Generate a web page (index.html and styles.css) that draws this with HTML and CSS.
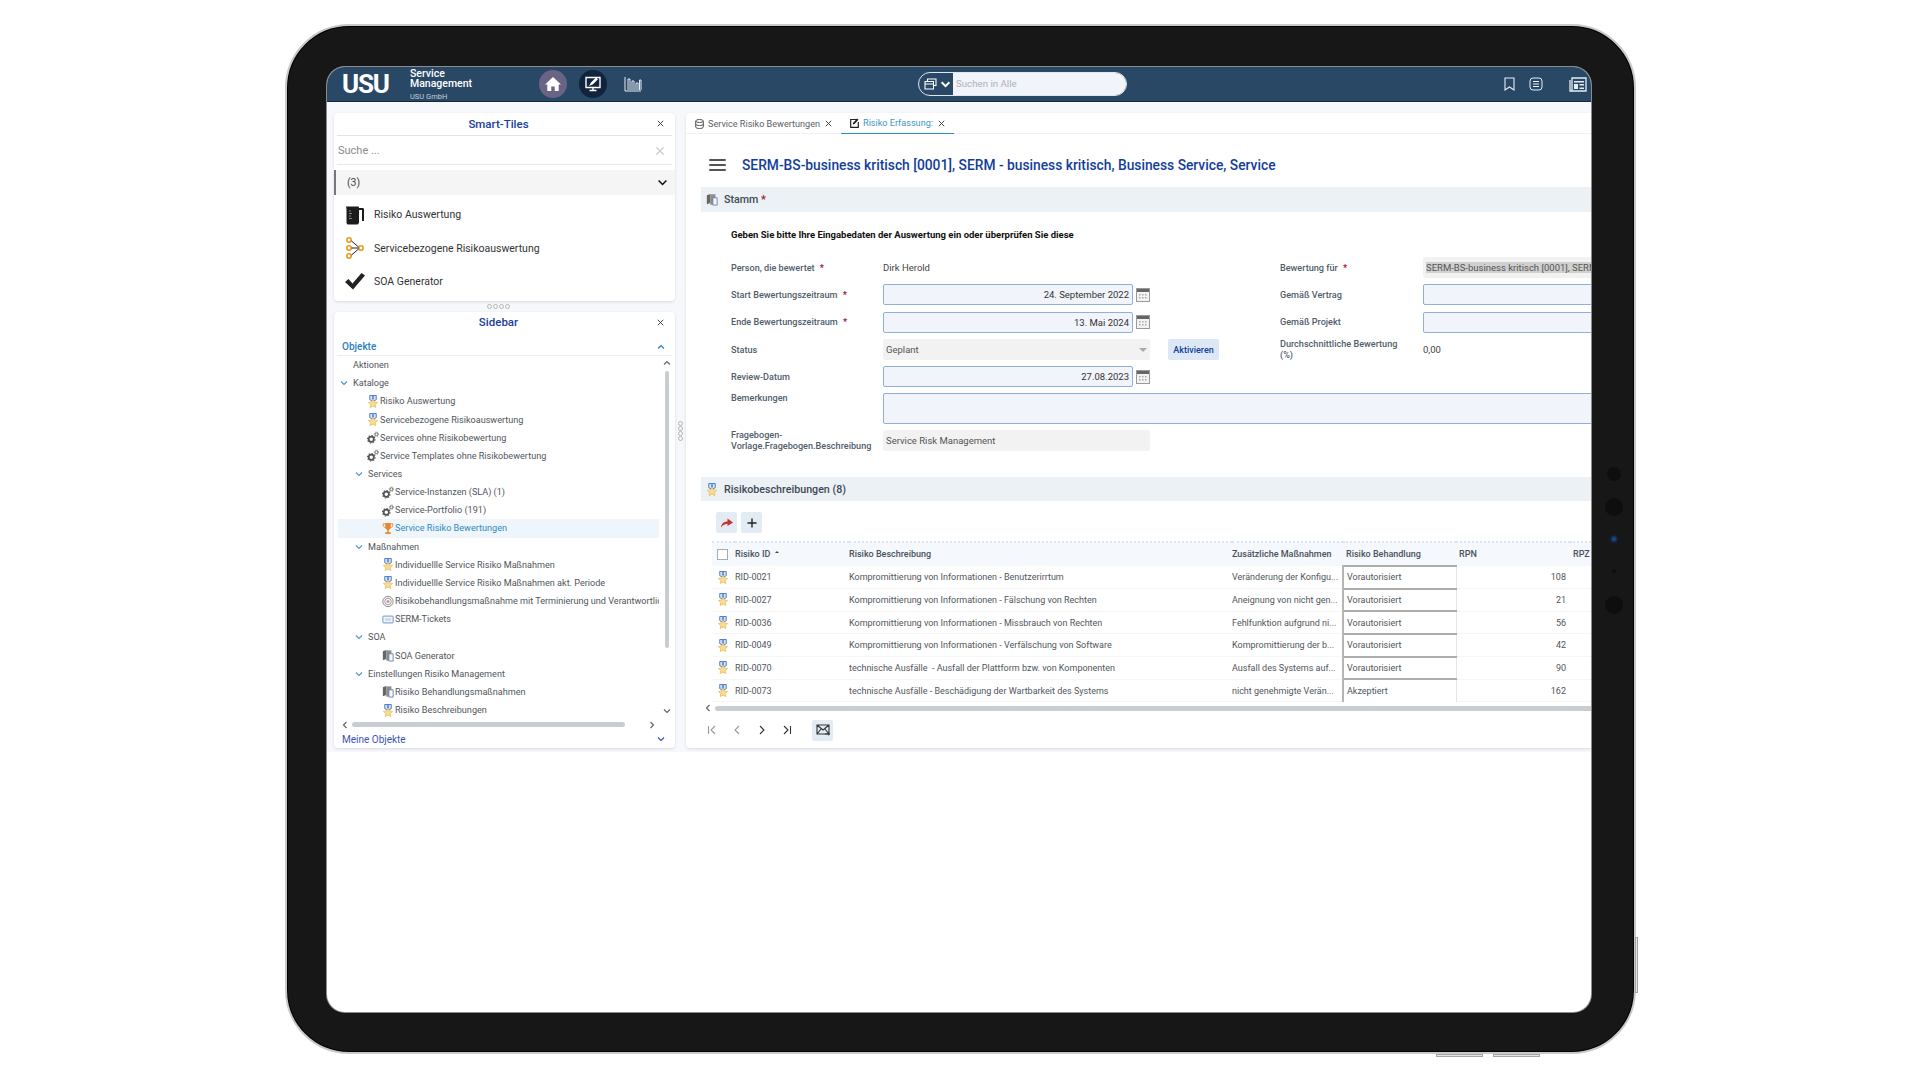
FILE: index.html
```html
<!DOCTYPE html>
<html lang="de">
<head>
    <meta charset="UTF-8">
    <title>USU Service Management</title>
    <link rel="stylesheet" href="styles.css">
</head>
<body>

<svg class="sprite" width="0" height="0">
    <symbol id="medal" viewBox="0 0 12 14">
        <path d="M2.500 .5h7v4.500L6 7 2.500 5z" fill="#dfe9f7" stroke="#3f74c6"/>
        <path d="M4.800 1h2.400v4H4.800z" fill="#6f97d6"/>
        <path d="M6 4.500l1.600 3 3.400.5-2.500 2.300.6 3.200L6 12l-3.100 1.500.6-3.200L1 8l3.400-.5z" fill="#f6dc94" stroke="#e9b548" stroke-width=".7"/>
    </symbol>
    <symbol id="gears" viewBox="0 0 14 14">
        <circle cx="5" cy="9" r="3" fill="none" stroke="#555" stroke-width="2"/>
        <circle cx="5" cy="9" r="4.400" fill="none" stroke="#555" stroke-width="1.300" stroke-dasharray="1.700 1.700"/>
        <circle cx="11" cy="3.200" r="1.700" fill="none" stroke="#666" stroke-width="1.100"/>
        <circle cx="11" cy="3.200" r="2.600" fill="none" stroke="#666" stroke-width=".8" stroke-dasharray="1 1"/>
    </symbol>
    <symbol id="trophy" viewBox="0 0 12 14">
        <path d="M3 1h6v4.500C9 7.500 7.500 8.500 6.800 8.500V11H9v2H3v-2h2.200V8.500C4.500 8.500 3 7.500 3 5.500z" fill="#e58a2c"/>
        <path d="M3 2H.7c0 2.500 1 4 2.800 4.400M9 2h2.300c0 2.500-1 4-2.800 4.400" fill="none" stroke="#e58a2c"/>
    </symbol>
    <symbol id="target" viewBox="0 0 14 14">
        <circle cx="7" cy="7" r="6" fill="none" stroke="#777"/>
        <circle cx="7" cy="7" r="3.800" fill="none" stroke="#888"/>
        <circle cx="7" cy="7" r="1.800" fill="#d98aa0"/>
    </symbol>
    <symbol id="ticket" viewBox="0 0 14 14">
        <rect x="1" y="3" width="12" height="8" rx="1" fill="#eef4fb" stroke="#5f86bd"/>
        <path d="M3.500 5.500h7v3h-7z" fill="#c9d9ee"/>
    </symbol>
    <symbol id="book" viewBox="0 0 14 14">
        <path d="M1 2l4-1.500V11l-4 1.500z" fill="#666"/>
        <path d="M5 1h6v12H5z" fill="#8c8c8c"/>
        <path d="M8 5h5v8.500H8z" fill="#f4f6fa" stroke="#5f7ea8"/>
    </symbol>
    <symbol id="chev" viewBox="0 0 10 10">
        <path d="M2 3.500L5 6.500 8 3.500" fill="none" stroke="currentColor" stroke-width="1.200"/>
    </symbol>
    <symbol id="cross" viewBox="0 0 10 10">
        <path d="M2 2l6 6M8 2L2 8" fill="none" stroke="currentColor" stroke-width="1.100"/>
    </symbol>
    <symbol id="calendar" viewBox="0 0 14 14">
        <rect x=".5" y=".5" width="13" height="13" fill="#f3f3f3" stroke="#999"/>
        <rect x="1" y="1" width="12" height="3" fill="#666"/>
        <path d="M3 6h1.500v1.500H3zM6 6h1.500v1.500H6zM9 6h1.500v1.500H9zM3 9h1.500v1.500H3zM6 9h1.500v1.500H6zM9 9h1.500v1.500H9z" fill="#aaa"/>
    </symbol>
</svg>

<div class="device">
    <div class="screen">

        <header class="topbar">
            <div class="logo">USU</div>
            <div class="brand">
                <div>Service</div>
                <div>Management</div>
                <div class="brand-sub">USU GmbH</div>
            </div>
            <div class="nav">
                <div class="nav-btn home">
                    <svg width="18" height="18" viewBox="0 0 18 18"><path d="M9 2L1 9.500h2.300V16h4v-4.500h3.400V16h4V9.500H17z" fill="#fff"/></svg>
                </div>
                <div class="nav-btn monitor">
                    <svg width="18" height="18" viewBox="0 0 18 18"><path d="M2 2.500h14v10H2zM9 12.500v2.500M5.500 15.500h7" fill="none" stroke="#fff" stroke-width="1.400"/><path d="M5 11l2-3.500 5-5 2 1.800-5 5z" fill="#fff"/></svg>
                </div>
                <div class="nav-btn chart">
                    <svg width="18" height="18" viewBox="0 0 18 18"><path d="M1 2v14h16M4 15V4M4 4h2v11M8 15V6h2v9M12 15V8h2v7M15.500 15V5h1.500v10" fill="none" stroke="#e6edf4" stroke-width="1"/></svg>
                </div>
            </div>
            <div class="search">
                <div class="search-type">
                    <svg width="13" height="12" viewBox="0 0 13 12"><path d="M3.500 3V1H12v6.500h-2M1 3.500h8.500V11H1zM1 6h8.500" fill="none" stroke="#fff" stroke-width="1.100"/></svg>
                    <svg width="11" height="11" viewBox="0 0 10 10"><path d="M1.500 3L5 6.500 8.500 3" fill="none" stroke="#fff" stroke-width="1.800"/></svg>
                </div>
                <div class="search-input">Suchen in Alle</div>
            </div>
            <div class="top-icons">
                <svg class="bookmark" width="11" height="14" viewBox="0 0 11 14"><path d="M1 1h9v12L5.500 10 1 13z" fill="none" stroke="#e6edf4" stroke-width="1.100"/></svg>
                <svg class="listing" width="14" height="14" viewBox="0 0 14 14"><rect x="1" y="1" width="12" height="12" rx="3" fill="none" stroke="#e6edf4"/><path d="M4 4.500h6M4 7h6M4 9.500h6" stroke="#e6edf4"/></svg>
                <svg class="paper" width="18" height="15" viewBox="0 0 18 15"><path d="M3 1h14v13H3zM1 3v11h2" fill="none" stroke="#e6edf4" stroke-width="1.300"/><path d="M5 4h10v1.500H5zM5 7h4v5H5zM10.500 7H15v1.500h-4.500zM10.500 10.500H15V12h-4.500z" fill="#e6edf4"/></svg>
            </div>
        </header>

        <div class="workspace">
            <div class="leftcol">

                <section class="panel tiles">
                    <div class="panel-head tiles-head">
                        <span class="panel-title">Smart-Tiles</span>
                        <svg class="panel-close"><use href="#cross"/></svg>
                    </div>
                    <div class="tile-search">
                        <span>Suche ...</span>
                        <svg class="tile-clear"><use href="#cross"/></svg>
                    </div>
                    <div class="tile-group">
                        <span>(3)</span>
                        <svg class="tile-group-chev"><use href="#chev"/></svg>
                    </div>
                    <div class="tile">
                        <svg width="20" height="20" viewBox="0 0 20 20"><path d="M1 1.500h12.500l.5 1V18l-1.500 1.500h-10L1.500 18V4z" fill="#1c1c1c"/><path d="M14 3h3.500c1 0 1.500.6 1.500 1.500V16h-2V5h-3z" fill="#1c1c1c"/><path d="M4 6h2M4 8.500h3M4 11h2M4 13.500h3" stroke="#888"/></svg>
                        <span>Risiko Auswertung</span>
                    </div>
                    <div class="tile">
                        <svg width="20" height="22" viewBox="0 0 20 22"><g fill="none" stroke="#e39a1c" stroke-width="1.500"><circle cx="4" cy="3" r="2.200"/><circle cx="4" cy="11" r="2.200"/><circle cx="4" cy="19" r="2.200"/><circle cx="16" cy="11" r="2.200"/></g><path d="M6.500 4l7 6M6.500 11h7M6.500 18l7-6" stroke="#222" stroke-width="1"/></svg>
                        <span>Servicebezogene Risikoauswertung</span>
                    </div>
                    <div class="tile">
                        <svg width="20" height="17" viewBox="0 0 20 17"><path d="M0 9l3.500-3 4 4.500L16.500 0 20 2.500 8 16.500z" fill="#222"/></svg>
                        <span>SOA Generator</span>
                    </div>
                </section>

                <div class="split-h"><i></i><i></i><i></i><i></i></div>

                <section class="panel sidebar">
                    <div class="panel-head">
                        <span class="panel-title">Sidebar</span>
                        <svg class="panel-close"><use href="#cross"/></svg>
                    </div>
                    <div class="acc-head open">
                        <span>Objekte</span>
                        <svg class="acc-chev up"><use href="#chev"/></svg>
                    </div>
                    <div class="tree-wrap">
                        <div class="tree">
                            <div class="row l0"><i class="twist"></i><span>Aktionen</span></div>
                            <div class="row l0"><svg class="twist"><use href="#chev"/></svg><span>Kataloge</span></div>
                            <div class="row i1"><svg class="ico"><use href="#medal"/></svg><span>Risiko Auswertung</span></div>
                            <div class="row i1"><svg class="ico"><use href="#medal"/></svg><span>Servicebezogene Risikoauswertung</span></div>
                            <div class="row i1"><svg class="ico"><use href="#gears"/></svg><span>Services ohne Risikobewertung</span></div>
                            <div class="row i1"><svg class="ico"><use href="#gears"/></svg><span>Service Templates ohne Risikobewertung</span></div>
                            <div class="row l1"><svg class="twist"><use href="#chev"/></svg><span>Services</span></div>
                            <div class="row i2"><svg class="ico"><use href="#gears"/></svg><span>Service-Instanzen (SLA) (1)</span></div>
                            <div class="row i2"><svg class="ico"><use href="#gears"/></svg><span>Service-Portfolio (191)</span></div>
                            <div class="row i2 selected"><svg class="ico"><use href="#trophy"/></svg><span>Service Risiko Bewertungen</span></div>
                            <div class="row l1"><svg class="twist"><use href="#chev"/></svg><span>Maßnahmen</span></div>
                            <div class="row i2"><svg class="ico"><use href="#medal"/></svg><span>Individuellle Service Risiko Maßnahmen</span></div>
                            <div class="row i2"><svg class="ico"><use href="#medal"/></svg><span>Individuellle Service Risiko Maßnahmen akt. Periode</span></div>
                            <div class="row i2"><svg class="ico"><use href="#target"/></svg><span>Risikobehandlungsmaßnahme mit Terminierung und Verantwortlichkeit</span></div>
                            <div class="row i2"><svg class="ico"><use href="#ticket"/></svg><span>SERM-Tickets</span></div>
                            <div class="row l1"><svg class="twist"><use href="#chev"/></svg><span>SOA</span></div>
                            <div class="row i2"><svg class="ico"><use href="#book"/></svg><span>SOA Generator</span></div>
                            <div class="row l1"><svg class="twist"><use href="#chev"/></svg><span>Einstellungen Risiko Management</span></div>
                            <div class="row i2"><svg class="ico"><use href="#book"/></svg><span>Risiko Behandlungsmaßnahmen</span></div>
                            <div class="row i2"><svg class="ico"><use href="#medal"/></svg><span>Risiko Beschreibungen</span></div>
                        </div>
                        <div class="vscroll">
                            <svg class="arrow up"><use href="#chev"/></svg>
                            <div class="vthumb"></div>
                            <svg class="arrow"><use href="#chev"/></svg>
                        </div>
                    </div>
                    <div class="hscroll">
                        <svg class="arrow left"><use href="#chev"/></svg>
                        <div class="hthumb"></div>
                        <svg class="arrow right"><use href="#chev"/></svg>
                    </div>
                    <div class="acc-head closed">
                        <span>Meine Objekte</span>
                        <svg class="acc-chev"><use href="#chev"/></svg>
                    </div>
                </section>
            </div>

            <div class="split-v"><i></i><i></i><i></i><i></i></div>

            <main class="panel content">
                <div class="tabs">
                    <div class="tab">
                        <svg width="9" height="10" viewBox="0 0 9 10"><ellipse cx="4.500" cy="2" rx="3.800" ry="1.500" fill="none" stroke="#555"/><path d="M.7 2v6c0 2 7.600 2 7.600 0V2M.7 5c0 2 7.600 2 7.600 0" fill="none" stroke="#555"/></svg>
                        <span>Service Risiko Bewertungen</span>
                        <svg class="tab-close"><use href="#cross"/></svg>
                    </div>
                    <div class="tab active">
                        <svg width="9" height="10" viewBox="0 0 9 10"><path d="M7 1.500H.7v7.800h7.600V4" fill="none" stroke="#222" stroke-width="1.200"/><path d="M3 5l4-4.500 1.500 1.300-4 4.200-1.800.4z" fill="#222"/></svg>
                        <span>Risiko Erfassung:</span>
                        <svg class="tab-close"><use href="#cross"/></svg>
                    </div>
                </div>

                <div class="title-row">
                    <div class="burger"><i></i><i></i><i></i></div>
                    <h1>SERM-BS-business kritisch [0001], SERM - business kritisch, Business Service, Service</h1>
                </div>

                <div class="band"><svg class="band-ico"><use href="#book"/></svg><span>Stamm <b class="req">*</b></span></div>
                <p class="note">Geben Sie bitte Ihre Eingabedaten der Auswertung ein oder überprüfen Sie diese</p>

                <div class="form">
                    <label class="f-label">Person, die bewertet <b class="req">*</b></label>
                    <div class="f-text f-wide">Dirk Herold</div>
                    <label class="f-label c6">Bewertung für <b class="req">*</b></label>
                    <div class="f-ro c7"><span class="marked">SERM-BS-business kritisch [0001], SERM - business kritisch, Business Service</span></div>

                    <label class="f-label">Start Bewertungszeitraum <b class="req">*</b></label>
                    <div class="f-input">24. September 2022</div>
                    <svg class="cal"><use href="#calendar"/></svg>
                    <label class="f-label c6">Gemäß Vertrag</label>
                    <div class="f-input c7"></div>

                    <label class="f-label">Ende Bewertungszeitraum <b class="req">*</b></label>
                    <div class="f-input">13. Mai 2024</div>
                    <svg class="cal"><use href="#calendar"/></svg>
                    <label class="f-label c6">Gemäß Projekt</label>
                    <div class="f-input c7"></div>

                    <label class="f-label">Status</label>
                    <div class="f-select">Geplant<i class="caret"></i></div>
                    <button class="btn-activate">Aktivieren</button>
                    <label class="f-label c6 two-line">Durchschnittliche Bewertung<br>(%)</label>
                    <div class="f-text c7">0,00</div>

                    <label class="f-label">Review-Datum</label>
                    <div class="f-input">27.08.2023</div>
                    <svg class="cal"><use href="#calendar"/></svg>

                    <label class="f-label top">Bemerkungen</label>
                    <div class="f-input f-area"></div>

                    <label class="f-label two-line">Fragebogen-<br>Vorlage.Fragebogen.Beschreibung</label>
                    <div class="f-ro f-span">Service Risk Management</div>
                </div>

                <div class="band band-second"><svg class="band-ico"><use href="#medal"/></svg><span>Risikobeschreibungen (8)</span></div>

                <div class="toolbar">
                    <div class="tool"><svg width="13" height="10" viewBox="0 0 13 10"><path d="M1 9.500C1.500 5.500 4 3.500 7.500 3.500V.5L13 4.500 7.500 8V5.800C5 5.800 3 7 1 9.500z" fill="#c8322c"/></svg></div>
                    <div class="tool"><svg width="10" height="10" viewBox="0 0 10 10"><path d="M5 .5v9M.5 5h9" stroke="#222" stroke-width="1.400"/></svg></div>
                </div>

                <table class="grid">
                    <colgroup><col class="w-check"><col class="w-id"><col class="w-desc"><col class="w-add"><col class="w-treat"><col class="w-rpn"><col class="w-rpz"></colgroup>
                    <thead>
                        <tr>
                            <th class="check"><i class="box"></i></th>
                            <th>Risiko ID <i class="sort"></i></th>
                            <th>Risiko Beschreibung</th>
                            <th>Zusätzliche Maßnahmen</th>
                            <th class="th-treat">Risiko Behandlung</th>
                            <th class="th-treat">RPN</th>
                            <th class="th-treat">RPZ</th>
                        </tr>
                    </thead>
                    <tbody>
                        <tr><td class="check"><svg class="ico"><use href="#medal"/></svg></td><td>RID-0021</td><td>Kompromittierung von Informationen - Benutzerirrtum</td><td>Veränderung der Konfigu...</td><td class="treat">Vorautorisiert</td><td class="num">108</td><td></td></tr>
                        <tr><td class="check"><svg class="ico"><use href="#medal"/></svg></td><td>RID-0027</td><td>Kompromittierung von Informationen - Fälschung von Rechten</td><td>Aneignung von nicht gen...</td><td class="treat">Vorautorisiert</td><td class="num">21</td><td></td></tr>
                        <tr><td class="check"><svg class="ico"><use href="#medal"/></svg></td><td>RID-0036</td><td>Kompromittierung von Informationen - Missbrauch von Rechten</td><td>Fehlfunktion aufgrund ni...</td><td class="treat">Vorautorisiert</td><td class="num">56</td><td></td></tr>
                        <tr><td class="check"><svg class="ico"><use href="#medal"/></svg></td><td>RID-0049</td><td>Kompromittierung von Informationen - Verfälschung von Software</td><td>Kompromittierung der b...</td><td class="treat">Vorautorisiert</td><td class="num">42</td><td></td></tr>
                        <tr><td class="check"><svg class="ico"><use href="#medal"/></svg></td><td>RID-0070</td><td>technische Ausfälle&nbsp; - Ausfall der Plattform bzw. von Komponenten</td><td>Ausfall des Systems auf...</td><td class="treat">Vorautorisiert</td><td class="num">90</td><td></td></tr>
                        <tr><td class="check"><svg class="ico"><use href="#medal"/></svg></td><td>RID-0073</td><td>technische Ausfälle - Beschädigung der Wartbarkeit des Systems</td><td>nicht genehmigte Verän...</td><td class="treat last">Akzeptiert</td><td class="num">162</td><td></td></tr>
                    </tbody>
                </table>

                <div class="grid-scroll">
                    <svg class="arrow left"><use href="#chev"/></svg>
                    <div class="grid-thumb"></div>
                </div>

                <div class="pager">
                    <svg class="pg dim" viewBox="0 0 10 10"><path d="M1.500 1v8M8 1L4 5l4 4" fill="none" stroke="#999" stroke-width="1.100"/></svg>
                    <svg class="pg dim" viewBox="0 0 10 10"><path d="M7 1L3 5l4 4" fill="none" stroke="#999" stroke-width="1.100"/></svg>
                    <svg class="pg" viewBox="0 0 10 10"><path d="M3 1l4 4-4 4" fill="none" stroke="#333" stroke-width="1.100"/></svg>
                    <svg class="pg" viewBox="0 0 10 10"><path d="M2 1l4 4-4 4M8.500 1v8" fill="none" stroke="#333" stroke-width="1.100"/></svg>
                    <div class="mail">
                        <svg width="14" height="12" viewBox="0 0 14 12"><path d="M1 1h12v9H1zM1 1l6 5 6-5M1 10l4-5M13 10L9 5" fill="none" stroke="#333" stroke-width="1.100"/><path d="M9 9.500h3.500V8l1.500 2-1.500 2v-1.500H9z" fill="#333"/></svg>
                    </div>
                </div>
            </main>
        </div>
    </div>

    <div class="sensors">
        <i class="lens mid"></i>
        <i class="lens big"></i>
        <i class="lens cam"></i>
        <i class="lens dot"></i>
        <i class="lens big"></i>
    </div>
    <i class="hw vol-a"></i>
    <i class="hw vol-b"></i>
    <i class="hw power"></i>
</div>

</body>
</html>
```

FILE: styles.css
```css
* {
    box-sizing: border-box;
}
body {
    margin: 0;
    height: 1080px;
    overflow: hidden;
    background: #fff;
    font-family: Roboto, "Liberation Sans", sans-serif;
    color: #444;
}
.sprite {
    position: absolute;
}

/* tablet frame */
.device {
    position: relative;
    width: 1351px;
    height: 1030px;
    margin: 24px 0 0 285px;
    padding: 41px 43px 40px 40px;
    background: #171717;
    border: 2px solid #c9c9c9;
    border-radius: 64px;
    box-shadow: inset 0 0 0 1px #000;
}
.screen {
    height: 945px;
    background: #fff;
    border-radius: 18px;
    overflow: hidden;
    box-shadow: 0 0 0 1px #8c8c8c;
}
.sensors {
    position: absolute;
    left: 1312px;
    top: 441px;
    width: 30px;
    height: 150px;
}
.lens {
    position: absolute;
    background: #0e0e0e;
    border-radius: 50%;
}
.lens.mid { left: 8px; top: 0; width: 14px; height: 14px; }
.lens.big { left: 6px; top: 31px; width: 18px; height: 18px; }
.lens.cam { left: 10px; top: 67px; width: 10px; height: 10px; background: radial-gradient(#174a8c 0 14%, #141a24 55%); }
.lens.dot { left: 13px; top: 102px; width: 4px; height: 4px; }
.lens.big:last-child { top: 129px; }
.hw {
    position: absolute;
    background: #e4e4e4;
    border: 1px solid #a5a5a5;
}
.vol-a { left: 1149px; top: 1028px; width: 47px; height: 3px; }
.vol-b { left: 1206px; top: 1028px; width: 47px; height: 3px; }
.power { left: 1348px; top: 911px; width: 3px; height: 56px; }

/* top bar */
.topbar {
    display: flex;
    align-items: center;
    height: 35px;
    background: #284866;
    border-bottom: 1px solid #12283f;
    color: #fff;
}
.logo {
    width: 83px;
    padding-left: 15px;
    font-size: 26px;
    font-weight: 700;
    letter-spacing: -1.200px;
}
.brand {
    width: 129px;
    font-size: 10.500px;
    font-weight: 500;
    line-height: 10px;
    padding-top: 3px;
}
.brand-sub {
    font-size: 7.500px;
    font-weight: 400;
    color: #c4d0dc;
    margin-top: 3px;
}
.nav {
    display: flex;
    gap: 12px;
    width: 379px;
}
.nav-btn {
    display: flex;
    align-items: center;
    justify-content: center;
    width: 28px;
    height: 28px;
    border-radius: 50%;
}
.home { background: #6a6484; }
.monitor { background: #12233d; }
.search {
    display: flex;
    width: 209px;
    height: 24px;
    border: 1px solid #dfe6ee;
    border-radius: 12px;
    overflow: hidden;
}
.search-type {
    display: flex;
    align-items: center;
    gap: 3px;
    width: 34px;
    padding-left: 5px;
}
.search-input {
    flex: 1;
    padding-left: 3px;
    background: #f1f4fa;
    color: #adb2b8;
    font-size: 9.700px;
    line-height: 22px;
}
.top-icons {
    display: flex;
    align-items: center;
    margin-left: 377px;
}
.listing { margin-left: 14px; }
.paper { margin-left: 26px; }

/* workspace */
.workspace {
    display: flex;
    height: 650px;
    padding: 11px 0 4px 7px;
    background: #f7f8fb;
}
.leftcol {
    display: flex;
    flex-direction: column;
    width: 341px;
    flex: none;
}
.panel {
    background: #fff;
    border-radius: 4px;
    box-shadow: 0 1px 3px rgba(60, 70, 90, .16);
}
.split-h {
    display: flex;
    justify-content: center;
    align-items: center;
    gap: 1px;
    height: 11px;
    padding-right: 12px;
}
.split-h i, .split-v i {
    width: 5px;
    height: 5px;
    border: 1px solid #b5b5b5;
    border-radius: 50%;
}
.split-v {
    display: flex;
    flex-direction: column;
    align-items: center;
    gap: 0;
    width: 11px;
    flex: none;
    padding-top: 308px;
}

/* smart tiles */
.tiles {
    height: 188px;
}
.panel-head {
    display: flex;
    align-items: center;
    justify-content: center;
    position: relative;
    height: 21px;
    padding-right: 12px;
}
.tiles-head {
    height: 23px;
    margin: 0 3px;
    border-bottom: 1px solid #e3e3e3;
}
.panel-title {
    color: #17409c;
    font-size: 11.500px;
    font-weight: 500;
}
.panel-close {
    position: absolute;
    right: 10px;
    top: 6px;
    width: 9px;
    height: 9px;
    color: #444;
}
.tiles-head .panel-close {
    right: 7px;
}
.tile-search {
    display: flex;
    align-items: center;
    justify-content: space-between;
    height: 29px;
    margin: 0 3px;
    padding: 1px 1px 0;
    border-bottom: 1px solid #e8e8e8;
    color: #8b8b8b;
    font-size: 11px;
}
.tile-clear {
    width: 12px;
    height: 12px;
    margin-right: 5px;
    color: #c8c8c8;
}
.tile-group {
    display: flex;
    align-items: center;
    justify-content: space-between;
    height: 25px;
    margin-top: 5px;
    padding: 0 6px 1px 11px;
    background: #f5f5f5;
    border-left: 2px solid #777;
    font-size: 10.500px;
}
.tile-group-chev {
    width: 13px;
    height: 13px;
    color: #111;
}
.tile {
    display: flex;
    align-items: center;
    height: 33.500px;
    padding-left: 11px;
    color: #333;
    font-size: 10.500px;
}
.tile svg {
    flex: none;
    width: 20px;
    margin-right: 9px;
}
.tile-group + .tile {
    margin-top: 3px;
}

/* sidebar tree */
.sidebar {
    height: 436px;
}
.sidebar .panel-head {
    height: 20px;
}
.acc-head {
    display: flex;
    align-items: center;
    justify-content: space-between;
    margin: 0 3px;
    padding: 0 6px 0 5px;
    font-size: 10px;
    font-weight: 500;
}
.acc-head.open {
    height: 24px;
    padding-top: 6px;
    border-bottom: 1px solid #eee;
    color: #2a80c0;
}
.acc-head.closed {
    height: 18.500px;
    padding-top: 1px;
    color: #3a55b0;
    font-weight: 400;
}
.acc-chev {
    width: 10px;
    height: 10px;
    color: inherit;
}
.up {
    transform: rotate(180deg);
}
.tree-wrap {
    display: flex;
    height: 363.500px;
    padding-left: 4px;
}
.tree {
    flex: none;
    width: 321px;
    overflow: hidden;
}
.row {
    display: flex;
    align-items: center;
    height: 18.160px;
    color: #50565c;
    font-size: 9.100px;
    white-space: nowrap;
}
.l0 { padding-left: 1px; }
.l1 { padding-left: 16px; }
.i1 { padding-left: 29px; }
.i2 { padding-left: 44px; }
.twist {
    flex: none;
    width: 10px;
    height: 10px;
    margin-right: 4px;
    color: #4f9ad0;
}
.ico {
    flex: none;
    width: 12px;
    height: 13px;
    margin-right: 1px;
}
.selected {
    background: #eef5fb;
    color: #2f8bc4;
}
.vscroll {
    display: flex;
    flex-direction: column;
    align-items: center;
    width: 13px;
    padding: 2px 0 4px;
    margin-left: 1px;
}
.arrow {
    flex: none;
    width: 10px;
    height: 10px;
    color: #666;
}
.vthumb {
    flex: none;
    width: 4px;
    height: 277px;
    margin: 3px 0 auto;
    background: #c8cdd2;
    border-radius: 2px;
}
.hscroll {
    display: flex;
    align-items: center;
    height: 10px;
    padding-left: 6px;
}
.hscroll .left, .grid-scroll .left {
    transform: rotate(90deg);
}
.hscroll .right {
    transform: rotate(-90deg);
    margin-left: 22px;
}
.hthumb {
    width: 273px;
    height: 5px;
    margin-left: 2px;
    background: #c8cdd2;
    border-radius: 3px;
}

/* main panel */
.content {
    flex: 1;
    min-width: 0;
    overflow: hidden;
    border-radius: 4px 0 0 4px;
}
.tabs {
    display: flex;
    height: 21px;
    border-bottom: 1px solid #f1f1f1;
    padding-left: 9px;
    white-space: nowrap;
}
.tab {
    display: flex;
    align-items: center;
    gap: 4px;
    height: 21px;
    font-size: 9.100px;
    color: #5a5f65;
}
.tab + .tab {
    margin-left: 8px;
    padding: 0 8px 0 9px;
    border-bottom: 1px solid #2a8fc5;
    color: #3f95c9;
}
.tab-close {
    width: 9px;
    height: 9px;
    color: #444;
}
.title-row {
    display: flex;
    align-items: center;
    gap: 16px;
    height: 53px;
    padding: 9px 0 0 23px;
}
.burger {
    display: flex;
    flex-direction: column;
    gap: 3px;
    width: 17px;
}
.burger i {
    height: 2px;
    background: #555;
    border-radius: 1px;
}
h1 {
    margin: 0;
    color: #123e9a;
    font-size: 13.800px;
    font-weight: 500;
    white-space: nowrap;
}
.band {
    display: flex;
    align-items: center;
    gap: 6px;
    height: 25px;
    margin-left: 15px;
    padding-left: 5px;
    background: #ebf1f5;
    color: #3d4a56;
    font-size: 10.700px;
    font-weight: 500;
}
.band-ico {
    flex: none;
    width: 12px;
    height: 13px;
}
.band-second {
    height: 24px;
    margin-top: 26px;
}
.req {
    color: #a5123f;
    font-weight: 700;
}
.note {
    margin: 16px 0 15px 45px;
    height: 14px;
    line-height: 14px;
    color: #111;
    font-size: 9.500px;
    font-weight: 700;
    white-space: nowrap;
}

/* form */
.form {
    display: grid;
    grid-template-columns: 152px 250px 17px 18px 51px 61px 143px 320px;
    grid-template-rows: 21px 21px 22px 21px 21px 31px 21px;
    row-gap: 6px;
    margin-left: 45px;
    align-items: center;
}
.f-label {
    grid-column: 1;
    color: #4f5d6b;
    font-size: 9.100px;
    font-weight: 500;
}
.f-label .req {
    margin-left: 3px;
}
.f-label.top {
    align-self: start;
}
.two-line {
    line-height: 11px;
}
.f-text {
    grid-column: 2;
    color: #444;
    font-size: 9.500px;
}
.f-wide {
    grid-column: 2 / 6;
}
.f-input {
    grid-column: 2;
    height: 21px;
    padding-right: 3px;
    background: #f1f4fa;
    border: 1px solid #8fb0d8;
    border-radius: 2px;
    color: #333;
    font-size: 9.500px;
    line-height: 20px;
    text-align: right;
}
.cal {
    grid-column: 3;
    justify-self: end;
    width: 14px;
    height: 14px;
}
.f-select {
    grid-column: 2 / 4;
    position: relative;
    height: 21px;
    padding-left: 3px;
    background: #f2f2f2;
    border-radius: 2px;
    color: #555;
    font-size: 9.500px;
    line-height: 21px;
}
.caret {
    position: absolute;
    right: 3px;
    top: 9px;
    border: 4px solid transparent;
    border-top-color: #aaa;
    border-bottom: 0;
}
.btn-activate {
    grid-column: 5;
    height: 21px;
    padding: 0;
    background: #dce8f5;
    border: 0;
    border-radius: 2px;
    color: #123e9a;
    font: 500 9px Roboto, sans-serif;
}
.c6 {
    grid-column: 7;
}
.c7 {
    grid-column: 8;
}
.f-ro {
    height: 21px;
    padding-left: 3px;
    background: #f2f2f2;
    border-radius: 2px;
    color: #555;
    font-size: 9.500px;
    line-height: 21px;
    white-space: nowrap;
    overflow: hidden;
}
.marked {
    background: #d0d0d0;
}
.f-area {
    grid-column: 2 / 9;
    height: 31px;
}
.f-span {
    grid-column: 2 / 4;
}
.form .c7.f-input {
    grid-column: 8;
}

/* risk table */
.toolbar {
    display: flex;
    gap: 4px;
    margin: 11px 0 8px 30px;
}
.tool {
    display: flex;
    align-items: center;
    justify-content: center;
    width: 21px;
    height: 21px;
    background: #e3ecf5;
    border-radius: 2px;
}
.grid {
    margin-left: 26px;
    width: 918px;
    table-layout: fixed;
    border-collapse: collapse;
    font-size: 9px;
    color: #50565c;
}
.w-check { width: 23px; }
.w-id { width: 114px; }
.w-desc { width: 383px; }
.w-add { width: 111px; }
.w-treat { width: 113px; }
.w-rpn { width: 114px; }
.w-rpz { width: 60px; }
.grid th {
    height: 24px;
    padding: 0 0 1px;
    background: #f5f8fc;
    border-top: 2px dotted #dde4f2;
    color: #48525c;
    font-weight: 500;
    text-align: left;
}
.grid .th-treat {
    padding-left: 3px;
}
.grid td {
    height: 22.670px;
    padding: 0;
    border-bottom: 1px solid #f6f6f6;
    white-space: nowrap;
    overflow: hidden;
}
.grid .check {
    padding-left: 5px;
}
.grid td .ico {
    display: block;
}
.box {
    display: block;
    width: 11px;
    height: 11px;
    background: #fff;
    border: 1px solid #aaa;
}
.sort {
    display: inline-block;
    margin-left: 2px;
    vertical-align: 4px;
    border: 2.500px solid transparent;
    border-bottom-color: #444;
    border-top: 0;
}
.grid .treat {
    padding-left: 3px;
    border-top: 2px solid #adadad;
    border-left: 2px solid #b5b5b5;
    border-right: 1px solid #e6e6e6;
    border-bottom: 0;
}
.grid .num {
    padding-right: 4px;
    text-align: right;
}
.grid-scroll {
    display: flex;
    align-items: center;
    height: 8px;
    margin: 2px 0 0 17px;
}
.grid-thumb {
    flex: 1;
    height: 5px;
    margin-left: 2px;
    background: #c8cdd2;
    border-radius: 3px 0 0 3px;
}
.pager {
    display: flex;
    align-items: center;
    height: 22px;
    margin: 7px 0 0 21px;
}
.pg {
    width: 10px;
    height: 10px;
    margin-right: 15px;
}
.mail {
    display: flex;
    align-items: center;
    justify-content: center;
    width: 21px;
    height: 21px;
    margin-left: 5px;
    background: #e3ecf5;
    border-radius: 2px;
}
```
